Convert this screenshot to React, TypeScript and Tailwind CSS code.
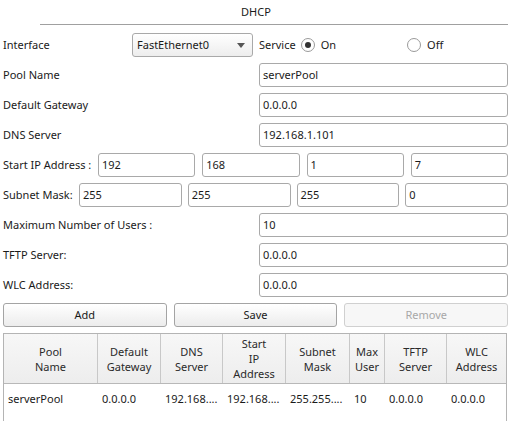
import React from "react";

const font = { fontFamily: '"Noto Sans", "Open Sans", sans-serif' };

function Field({ value, className = "" }: { value: string; className?: string }) {
  return (
    <div
      className={`h-[24px] rounded-[3px] border border-[#a9a9a9] bg-white px-[3px] flex items-center text-[11px] text-[#1a1a1a] ${className}`}
    >
      {value}
    </div>
  );
}

function Row({ label, value }: { label: string; value: string }) {
  return (
    <div className="flex items-center h-[24px]">
      <div className="w-[256px] shrink-0">{label}</div>
      <Field value={value} className="flex-1" />
    </div>
  );
}

function Radio({ checked }: { checked?: boolean }) {
  return (
    <span className="w-[14px] h-[14px] rounded-full border border-[#9a9a9a] bg-white flex items-center justify-center shrink-0">
      {checked && <span className="w-[6px] h-[6px] rounded-full bg-[#333]" />}
    </span>
  );
}

function Btn({ label, disabled }: { label: string; disabled?: boolean }) {
  return (
    <div
      className={`flex-1 h-[24px] rounded-[3px] border flex items-center justify-center ${
        disabled
          ? "border-[#d0d0d0] text-[#a8a8a8] bg-[#f7f7f7]"
          : "border-[#a4a4a4] text-[#1a1a1a] bg-gradient-to-b from-white to-[#ececec]"
      }`}
    >
      {label}
    </div>
  );
}

const cols = [
  { w: "w-[94px]", head: ["Pool", "Name"], val: "serverPool" },
  { w: "w-[63px]", head: ["Default", "Gateway"], val: "0.0.0.0" },
  { w: "w-[62px]", head: ["DNS", "Server"], val: "192.168...." },
  { w: "w-[63px]", head: ["Start", "IP", "Address"], val: "192.168...." },
  { w: "w-[64px]", head: ["Subnet", "Mask"], val: "255.255...." },
  { w: "w-[35px]", head: ["Max", "User"], val: "10" },
  { w: "w-[62px]", head: ["TFTP", "Server"], val: "0.0.0.0" },
  { w: "flex-1", head: ["WLC", "Address"], val: "0.0.0.0" },
];

export default function App() {
  return (
    <div className="w-[512px] h-[421px] overflow-hidden bg-white text-[11px] text-[#1a1a1a]" style={font}>
      <div className="h-[24px] flex items-center justify-center">DHCP</div>
      <div className="ml-[40px] mr-[4px] h-px bg-[#a0a0a0]" />

      <div className="pl-[3px] pr-[4px] pt-[8px] flex flex-col gap-[6px]">
        <div className="flex items-center h-[24px]">
          <div className="w-[129px] shrink-0">Interface</div>
          <div className="w-[121px] h-[24px] rounded-[3px] border border-[#a9a9a9] bg-gradient-to-b from-white to-[#ededed] flex items-center justify-between pl-[4px] pr-[7px]">
            <span>FastEthernet0</span>
            <svg width="8" height="5" viewBox="0 0 8 5">
              <path d="M0 0h8L4 5z" fill="#555" />
            </svg>
          </div>
          <div className="ml-[6px] flex items-center">
            <span>Service</span>
            <span className="ml-[5px]"><Radio checked /></span>
            <span className="ml-[6px]">On</span>
            <span className="ml-[71px]"><Radio /></span>
            <span className="ml-[6px]">Off</span>
          </div>
        </div>

        <Row label="Pool Name" value="serverPool" />
        <Row label="Default Gateway" value="0.0.0.0" />
        <Row label="DNS Server" value="192.168.1.101" />

        <div className="flex items-center h-[24px] gap-[7px]">
          <div className="w-[88px] shrink-0 whitespace-nowrap">Start IP Address :</div>
          <Field value="192" className="flex-1" />
          <Field value="168" className="flex-1" />
          <Field value="1" className="flex-1" />
          <Field value="7" className="flex-1" />
        </div>

        <div className="flex items-center h-[24px] gap-[6px]">
          <div className="w-[70px] shrink-0 whitespace-nowrap">Subnet Mask:</div>
          <Field value="255" className="flex-1" />
          <Field value="255" className="flex-1" />
          <Field value="255" className="flex-1" />
          <Field value="0" className="flex-1" />
        </div>

        <Row label="Maximum Number of Users :" value="10" />
        <Row label="TFTP Server:" value="0.0.0.0" />
        <Row label="WLC Address:" value="0.0.0.0" />

        <div className="flex gap-[7px]">
          <Btn label="Add" />
          <Btn label="Save" />
          <Btn label="Remove" disabled />
        </div>

        <div className="mr-[1px] border border-[#b4b4b4] h-[120px] flex flex-col">
          <div className="flex h-[50px] bg-gradient-to-b from-[#f7f7f7] to-[#ededed] border-b border-[#b8b8b8] text-[#2a2a2a]">
            {cols.map((c, i) => (
              <div
                key={i}
                className={`${c.w} shrink-0 flex flex-col items-center justify-center leading-[15px] text-center ${
                  i < cols.length - 1 ? "border-r border-[#c8c8c8]" : ""
                }`}
              >
                {c.head.map((h) => (
                  <span key={h}>{h}</span>
                ))}
              </div>
            ))}
          </div>
          <div className="flex h-[30px] items-center">
            {cols.map((c, i) => (
              <div key={i} className={`${c.w} shrink-0 pl-[4px] whitespace-nowrap overflow-hidden`}>
                {c.val}
              </div>
            ))}
          </div>
        </div>
      </div>
    </div>
  );
}
